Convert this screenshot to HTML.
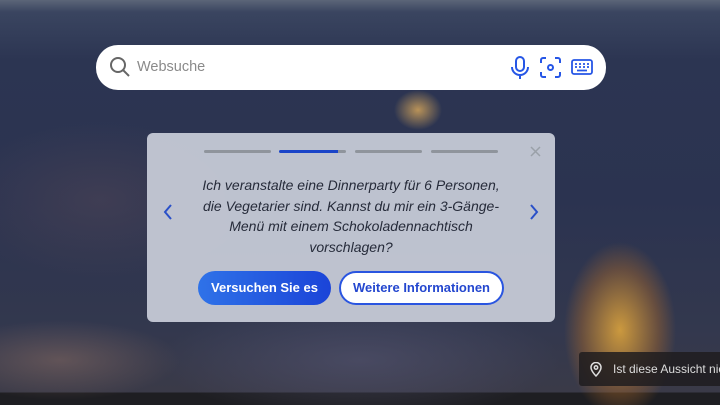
<!DOCTYPE html>
<html><head><meta charset="utf-8"><style>
*{margin:0;padding:0;box-sizing:border-box}
body{width:720px;height:405px;overflow:hidden;font-family:"Liberation Sans",sans-serif;position:relative;
background:
radial-gradient(ellipse 70px 110px at 620px 330px,rgba(230,170,60,.85),rgba(180,110,40,.4) 55%,transparent 80%),
radial-gradient(ellipse 30px 25px at 418px 110px,rgba(220,170,90,.8),transparent 80%),
radial-gradient(ellipse 120px 40px at 60px 360px,rgba(140,110,100,.5),transparent),
radial-gradient(ellipse 200px 60px at 360px 360px,rgba(90,90,120,.5),transparent),
radial-gradient(ellipse 150px 80px at 100px 200px,rgba(100,80,90,.35),transparent),
linear-gradient(180deg,#5b6578 0px,#3a4560 12px,#2c3552 60px,#2b3350 200px,#33384e 330px,#3a3a48 392px,#1e1e22 393px,#1e1e22 405px);}
.search{position:absolute;left:96px;top:45px;width:510px;height:45px;background:#fff;border-radius:22px}
.search .ph{position:absolute;left:41px;top:14px;font-size:14.5px;color:#8a8a8a}
.card{position:absolute;left:147px;top:133px;width:408px;height:189px;background:rgba(196,200,212,.96);border-radius:6px}
.bar{position:absolute;top:17px;height:3px;border-radius:2px;background:#8f949c;width:67px}
.txt{position:absolute;left:52px;top:42px;width:304px;text-align:center;font-style:italic;font-size:14px;line-height:20.5px;color:#262b3a}
.b1{position:absolute;left:51px;top:138px;width:133px;height:34px;border-radius:17px;background:linear-gradient(90deg,#2f72e8,#1b44d8);color:#fff;font-weight:bold;font-size:13px;text-align:center;line-height:34px}
.b2{position:absolute;left:192px;top:138px;width:165px;height:34px;border-radius:17px;background:#fff;border:2px solid #2a55e0;color:#2447cf;font-weight:bold;font-size:13px;text-align:center;line-height:30px}
.loc{position:absolute;left:579px;top:352px;width:141px;height:34px;background:rgba(30,28,30,.85);color:#ddd;font-size:12px;line-height:34px;padding-left:34px;white-space:nowrap;overflow:hidden;border-radius:3px 0 0 3px}
</style></head><body>
<div class="search">
<svg style="position:absolute;left:13px;top:11px" width="22" height="22" viewBox="0 0 22 22" fill="none" stroke="#666" stroke-width="2"><circle cx="9" cy="9" r="7"/><path d="M14 14l6 6"/></svg>
<div class="ph">Websuche</div>
<svg style="position:absolute;left:414px;top:11px" width="20" height="24" viewBox="0 0 20 24" fill="none" stroke="#2656e6" stroke-width="2"><rect x="6" y="1" width="8" height="14" rx="4"/><path d="M2 11a8 8 0 0 0 16 0M10 19v4"/></svg>
<svg style="position:absolute;left:444px;top:12px" width="21" height="21" viewBox="0 0 21 21" fill="none" stroke="#2656e6" stroke-width="2"><path d="M1 6V3a2 2 0 0 1 2-2h3M15 1h3a2 2 0 0 1 2 2v3M20 15v3a2 2 0 0 1-2 2h-3M6 20H3a2 2 0 0 1-2-2v-3"/><circle cx="10.5" cy="10.5" r="2.5"/></svg>
<svg style="position:absolute;left:475px;top:13px" width="22" height="18" viewBox="0 0 22 18" fill="none" stroke="#2656e6" stroke-width="1.8"><rect x="1" y="2" width="20" height="14" rx="2"/><path d="M4 6h2M8 6h2M12 6h2M16 6h2M4 9h2M8 9h2M12 9h2M16 9h2M6 12.5h10"/></svg>
</div>
<div class="card">
<div class="bar" style="left:57px"></div>
<div class="bar" style="left:132px;background:linear-gradient(90deg,#1a44c8 88%,#8f949c 88%)"></div>
<div class="bar" style="left:208px"></div>
<div class="bar" style="left:284px"></div>
<svg style="position:absolute;left:383px;top:13px" width="11" height="11" viewBox="0 0 11 11" stroke="#9aa0a8" stroke-width="1.5"><path d="M1 1l9 9M10 1l-9 9"/></svg>
<svg style="position:absolute;left:16px;top:71px" width="10" height="16" viewBox="0 0 10 16" fill="none" stroke="#2a50c8" stroke-width="2"><path d="M8 1L2 8l6 7"/></svg>
<svg style="position:absolute;left:382px;top:71px" width="10" height="16" viewBox="0 0 10 16" fill="none" stroke="#2a50c8" stroke-width="2"><path d="M2 1l6 7-6 7"/></svg>
<div class="txt">Ich veranstalte eine Dinnerparty für 6 Personen, die Vegetarier sind. Kannst du mir ein 3-Gänge-Menü mit einem Schokoladennachtisch vorschlagen?</div>
<div class="b1">Versuchen Sie es</div>
<div class="b2">Weitere Informationen</div>
</div>
<div class="loc"><svg style="position:absolute;left:11px;top:10px" width="12" height="15" viewBox="0 0 12 15" fill="none" stroke="#ddd" stroke-width="1.5"><path d="M6 14s5-5 5-8.5A5 5 0 0 0 1 5.5C1 9 6 14 6 14z"/><circle cx="6" cy="5.5" r="1.7"/></svg>Ist diese Aussicht nicht</div>
</body></html>
